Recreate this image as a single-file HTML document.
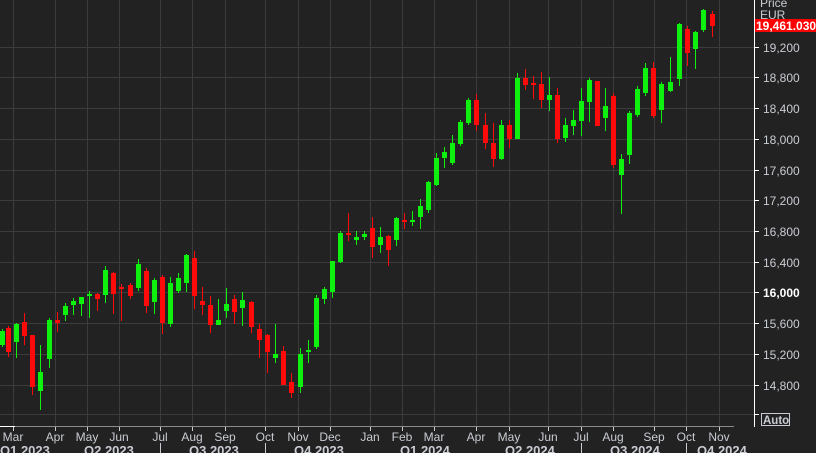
<!DOCTYPE html>
<html><head><meta charset="utf-8"><style>
html,body{margin:0;padding:0;background:#222223;}
body{width:816px;height:453px;overflow:hidden;position:relative;font-family:"Liberation Sans",sans-serif;}
svg{position:absolute;left:0;top:0;}
</style></head><body>
<svg id="s" width="816" height="453" xmlns="http://www.w3.org/2000/svg">
<rect width="816" height="453" fill="#222223"/>
<g id="grid" stroke="#3c3c3c" stroke-width="1"></g>
<g id="c"></g>
<line x1="0" y1="426.5" x2="734" y2="426.5" stroke="#8a8a8a"/>
<line x1="0" y1="426.5" x2="15" y2="426.5" stroke="#ffffff"/>
<line x1="754.5" y1="0" x2="754.5" y2="427" stroke="#ffffff"/>
<g id="ax" fill="#c9ccd2" font-size="12" font-family="Liberation Sans, sans-serif"></g>
<rect x="755" y="19" width="61" height="13" fill="#ff0000"/>
<text x="756" y="30" fill="#ffffff" font-size="12" font-weight="bold" font-family="Liberation Sans, sans-serif">19,461.030</text>
<text x="760" y="7" fill="#c9ccd2" font-size="12" font-family="Liberation Sans, sans-serif">Price</text>
<text x="760" y="19" fill="#c9ccd2" font-size="12" font-family="Liberation Sans, sans-serif">EUR</text>
<rect x="761.5" y="413.5" width="28" height="12" fill="none" stroke="#c9ccd2"/>
<text x="763" y="424" fill="#c9ccd2" font-size="11.5" font-weight="bold" font-family="Liberation Sans, sans-serif">Auto</text>
</svg>
<script>
var NS="http://www.w3.org/2000/svg";
function el(p,t,a,txt){var e=document.createElementNS(NS,t);for(var k in a)e.setAttribute(k,a[k]);if(txt)e.textContent=txt;p.appendChild(e);return e;}
var g=document.getElementById('grid'),ax=document.getElementById('ax'),c=document.getElementById('c');
var prices=[["19,200",47],["18,800",77],["18,400",108],["18,000",139],["17,600",170],["17,200",200],["16,800",231],["16,400",262],["16,000",292],["15,600",323],["15,200",354],["14,800",385],["",414]];
prices.forEach(function(p){el(g,'line',{x1:0,x2:754,y1:p[1]+.5,y2:p[1]+.5});el(ax,'line',{x1:755,x2:759,y1:p[1]+.5,y2:p[1]+.5,stroke:'#fff'});if(p[0])el(ax,'text',{x:763,y:p[1]+5,'font-weight':p[0]=="16,000"?'bold':'normal',fill:p[0]=="16,000"?'#ffffff':'#c9ccd2'},p[0]);});
var months=[["Mar",13],["Apr",55],["May",87],["Jun",119],["Jul",160],["Aug",192],["Sep",225],["Oct",265],["Nov",298],["Dec",330],["Jan",370],["Feb",402],["Mar",434],["Apr",476],["May",509],["Jun",548],["Jul",581],["Aug",613],["Sep",654],["Oct",686],["Nov",719]];
months.forEach(function(m){el(g,'line',{x1:m[1]+.5,x2:m[1]+.5,y1:0,y2:426});el(ax,'line',{x1:m[1]+.5,x2:m[1]+.5,y1:427,y2:431,stroke:'#c9ccd2'});el(ax,'text',{x:m[1],y:441,'text-anchor':'middle'},m[0]);});
var qs=[["Q1 2023",0],["Q2 2023",84],["Q3 2023",189],["Q4 2023",294],["Q1 2024",400],["Q2 2024",505],["Q3 2024",610],["Q4 2024",697]];
qs.forEach(function(q){el(ax,'text',{x:q[1],y:455,'font-weight':'bold','font-size':13},q[0]);});
[160,265,581,686].forEach(function(x){el(ax,'line',{x1:x+.5,x2:x+.5,y1:443,y2:453,stroke:'#c9ccd2'});});
// x, bodyTop, bodyBottom, wickTop, wickBottom, green?
var d=[
[0,331,345,329,347,1],[6,328,352,326,357,0],[14,324,342,323,358,1],[22,322,336,313,345,0],[30,335,387,335,395,0],[38,372,391,345,410,1],
[47,320,359,318,368,1],[55,320,323,312,332,0],[63,306,315,303,321,1],[71,301,305,298,315,1],[79,297,304,297,316,1],[87,294,296,291,318,1],
[95,294,299,293,311,0],[103,270,295,266,303,1],[111,273,294,272,314,0],[119,287,289,284,321,0],[128,285,296,283,299,0],[136,264,288,259,291,1],
[144,271,306,268,313,0],[152,280,302,278,314,1],[160,277,323,275,334,0],[168,283,324,277,327,1],[176,278,291,273,293,1],[184,255,283,254,292,1],
[192,258,296,251,309,0],[200,301,305,287,315,0],[208,305,325,296,333,0],[216,320,325,299,325,1],[224,304,311,288,318,1],[232,299,312,295,324,0],
[240,300,308,292,326,1],[249,302,327,301,333,0],[257,329,340,324,358,0],[265,335,352,334,373,0],[273,354,358,324,363,1],[281,351,385,346,385,0],
[289,382,393,373,398,0],[298,354,387,348,393,1],[306,350,352,340,363,1],[314,298,347,295,349,1],[322,289,299,287,304,1],[330,261,292,261,298,1],
[338,233,262,231,263,1],[346,233,235,213,241,0],[354,237,240,231,245,1],[362,234,237,231,240,1],[370,228,247,217,258,0],[378,237,245,227,253,1],
[386,236,250,235,266,0],[394,218,240,217,246,1],[402,220,222,213,229,0],[410,220,221,211,226,1],[418,206,217,199,229,1],[426,182,210,181,213,1],
[434,158,185,153,186,1],[442,152,158,147,168,1],[450,143,163,135,165,1],[458,122,144,120,146,1],[466,100,123,98,125,1],[474,100,125,94,131,0],
[483,125,143,113,149,0],[491,143,159,123,167,0],[499,125,159,120,160,1],[507,125,139,120,148,0],[515,78,139,73,139,1],[523,78,85,69,90,0],
[531,83,85,76,99,0],[539,84,100,72,108,0],[547,95,100,77,111,1],[555,95,139,88,143,0],[563,125,138,118,142,1],[571,120,126,110,135,1],
[579,101,121,88,136,1],[587,80,102,78,122,1],[595,81,126,81,126,0],[603,106,118,88,131,1],[611,96,165,93,168,0],[619,159,175,154,214,1],
[627,113,155,111,164,1],[635,89,115,86,117,1],[643,68,93,63,96,1],[651,68,116,62,118,0],[659,84,110,82,123,1],[668,82,91,57,92,1],
[677,24,79,23,86,1],[685,29,53,26,66,0],[693,32,49,31,69,1],[701,10,30,9,32,1],[710,14,26,11,37,0]
];
d.forEach(function(k){var col=k[5]?'#0ef00e':'#ff0a0a';el(c,'rect',{x:k[0]+2,y:k[3],width:1,height:k[4]-k[3],fill:col});var h=Math.max(2,k[2]-k[1]);el(c,'rect',{x:k[0],y:k[1],width:5,height:h,fill:col});});
</script>
</body></html>
